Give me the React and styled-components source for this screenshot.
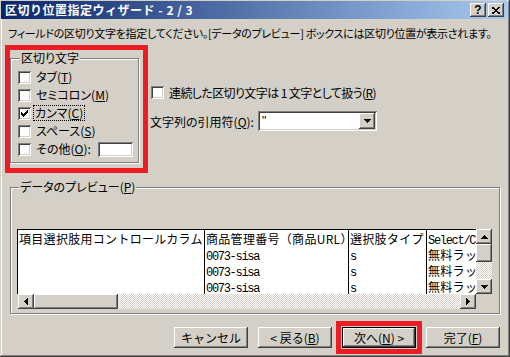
import React from "react";
import styled, { createGlobalStyle, css } from "styled-components";

const GlobalStyle = createGlobalStyle`
	html, body {
		margin: 0;
		padding: 0;
		background: #d4d0c8;
	}
	body {
		font-family: "Noto Sans CJK JP", "Liberation Sans", sans-serif;
		font-size: 12px;
		color: #000;
	}
`;

const raised = css`
	box-shadow: inset -1px -1px #404040, inset 1px 1px #fff,
		inset -2px -2px #808080, inset 2px 2px #d4d0c8;
`;
const sunken = css`
	box-shadow: inset 1px 1px #808080, inset -1px -1px #fff,
		inset 2px 2px #404040, inset -2px -2px #d4d0c8;
`;
const checker = css`
	background-color: #fff;
	background-image: conic-gradient(#d4d0c8 25%, #fff 0 50%, #d4d0c8 0 75%, #fff 0);
	background-size: 2px 2px;
`;

const Window = styled.div`
	width: 510px;
	height: 357px;
	box-sizing: border-box;
	padding: 1px 3px 3px 1px;
	background: #d4d0c8;
	box-shadow: inset -1px -1px #404040, inset 1px 1px #d4d0c8,
		inset -2px -2px #808080, inset 2px 2px #fff;
	display: flex;
	flex-direction: column;
	overflow: hidden;
	font-feature-settings: "palt";
`;
const TitleBar = styled.div`
	height: 18px;
	display: flex;
	align-items: center;
	padding: 0 3px 0 4px;
	background: linear-gradient(to right, #0a246a, #a6caf0);
`;
const Title = styled.div`
	flex: 1;
	color: #fff;
	font-weight: bold;
	line-height: 18px;
	letter-spacing: 0.5px;
	white-space: nowrap;
	font-feature-settings: normal;
`;
const TitleBtn = styled.div`
	width: 16px;
	height: 14px;
	background: #d4d0c8;
	${raised};
	display: flex;
	align-items: center;
	justify-content: center;
	font-family: "Liberation Sans", sans-serif;
	font-weight: bold;
	font-size: 12px;
	line-height: 14px;
	& + & {
		margin-left: 2px;
	}
`;

const Instruction = styled.div`
	margin: 7px 0 0 7px;
	font-size: 11px;
	letter-spacing: -0.3px;
	line-height: 14px;
	white-space: nowrap;
`;

const TopRow = styled.div`
	display: flex;
	margin: 5px 0 0 4px;
	height: 128px;
`;
const RedFrame = styled.div`
	border: 5px solid #ec1c24;
	box-sizing: border-box;
	width: ${p => p.$w || "auto"};
	padding: ${p => p.$pad || "0"};
	margin: ${p => p.$m || "0"};
	display: flex;
	flex-direction: column;
`;

const Group = styled.fieldset`
	margin: ${p => p.$m || "0"};
	min-width: 0;
	padding: ${p => p.$pad};
	border: 1px solid #808080;
	box-shadow: 1px 1px 0 #fff, inset 1px 1px 0 #fff;
`;
const Legend = styled.legend`
	padding: 0 1px;
	margin-left: 2px;
	line-height: 14px;
	background: #d4d0c8;
`;

const CheckRow = styled.div`
	display: flex;
	align-items: center;
	height: ${p => p.$h || "18px"};
	padding-left: ${p => p.$indent || "0"};
`;
const Box = styled.span`
	width: 13px;
	height: 13px;
	box-sizing: border-box;
	background: #fff;
	${sunken};
	display: inline-flex;
	align-items: center;
	justify-content: center;
	flex-shrink: 0;
`;
const Label = styled.span`
	margin-left: ${p => (p.$focus ? "2px" : "4px")};
	padding: 0 1px;
	line-height: 14px;
	letter-spacing: ${p => p.$ls || "normal"};
	white-space: pre;
	border: ${p => (p.$focus ? "1px dotted #000" : "0")};
`;
const TextBox = styled.span`
	margin-left: auto;
	width: 35px;
	height: 15px;
	box-sizing: border-box;
	background: #fff;
	${sunken};
`;

const Options = styled.div`
	margin-left: 2px;
	padding-top: 40px;
	display: flex;
	flex-direction: column;
`;
const QuoteRow = styled.div`
	display: flex;
	align-items: center;
	margin-top: 11px;
	height: 20px;
`;
const QuoteLabel = styled.span`
	width: 108px;
	white-space: nowrap;
`;
const Combo = styled.div`
	width: 119px;
	height: 20px;
	box-sizing: border-box;
	background: #fff;
	${sunken};
	display: flex;
	align-items: center;
	padding: 2px;
`;
const ComboText = styled.span`
	flex: 1;
	padding-left: 2px;
	font-family: "Liberation Sans", sans-serif;
	line-height: 16px;
`;
const ArrowBtn = styled.div`
	width: ${p => p.$w || "16px"};
	height: ${p => p.$h || "16px"};
	flex-shrink: 0;
	box-sizing: border-box;
	background: #d4d0c8;
	${raised};
	display: flex;
	align-items: center;
	justify-content: center;
`;

const Preview = styled.div`
	height: 80px;
	display: grid;
	grid-template-columns: minmax(0, 1fr) 16px;
	grid-template-rows: 65px 15px;
`;
const Table = styled.div`
	display: flex;
	min-width: 0;
	overflow: hidden;
	background: #fff;
	border-left: 1px solid #000;
	border-top: 1px solid #000;
	font-feature-settings: normal;
	font-size: 12px;
	letter-spacing: 0.3px;
`;
const Column = styled.div`
	flex: ${p => (p.$last ? "1 1 0" : `0 0 ${p.$w}`)};
	min-width: 0;
	box-sizing: border-box;
	border-right: ${p => (p.$last ? "0" : "1px solid #000")};
	overflow: hidden;
	white-space: nowrap;
`;
const Cell = styled.div`
	height: ${p => (p.$head ? "17px" : "16px")};
	line-height: ${p => (p.$head ? "17px" : "16px")};
	padding-left: 1px;
	overflow: hidden;
`;
const Latin = styled.span`
	font-family: "Liberation Mono", monospace;
	font-size: 12px;
	letter-spacing: -1.3px;
`;
const VScroll = styled.div`
	display: flex;
	flex-direction: column;
	${checker};
`;
const HScroll = styled.div`
	display: flex;
	margin-left: 1px;
	min-width: 0;
	${checker};
`;
const Thumb = styled.div`
	flex: 0 0 ${p => p.$size};
	background: #d4d0c8;
	${raised};
`;
const Spacer = styled.div`
	flex: 1;
`;

const ButtonRow = styled.div`
	display: flex;
	justify-content: flex-end;
	align-items: center;
	gap: 10px;
	margin: 13px 7px 0 0;
`;
const Button = styled.div`
	width: 74px;
	height: 21px;
	box-sizing: border-box;
	background: #d4d0c8;
	${raised};
	border: ${p => (p.$default ? "1px solid #000" : "0")};
	display: flex;
	align-items: center;
	justify-content: center;
	white-space: nowrap;
	line-height: 14px;
	font-feature-settings: normal;
`;

const Arrow = ({ dir }) => {
	const pts = {
		up: "0,4 7,4 3.5,0",
		down: "0,0 7,0 3.5,4",
		left: "4,0 4,7 0,3.5",
		right: "0,0 0,7 4,3.5",
	}[dir];
	const vertical = dir === "up" || dir === "down";
	return (
		<svg width={vertical ? 7 : 4} height={vertical ? 4 : 7} shapeRendering="crispEdges">
			<polygon points={pts} fill="#000" />
		</svg>
	);
};

const Check = () => (
	<svg width="7" height="7" viewBox="0 0 7 7" shapeRendering="crispEdges">
		<path
			d="M6 0h1v3h-1v1h-1v1h-1v1h-1v1h-1v-1h-1v-1h-1v-3h1v1h1v1h1v-1h1v-1h1z"
			fill="#000"
		/>
	</svg>
);

const delimiters = [
	{ text: "タブ", key: "T" },
	{ text: "セミコロン", key: "M" },
	{ text: "カンマ", key: "C", checked: true, focus: true },
	{ text: "スペース", key: "S" },
];

const columns = [
	{ w: "187px", head: "項目選択肢用コントロールカラム", rows: ["", "", ""] },
	{ w: "144px", head: "商品管理番号（商品URL）", rows: ["0073-sisa", "0073-sisa", "0073-sisa"], latin: true },
	{ w: "78px", head: "選択肢タイプ", rows: ["s", "s", "s"], latin: true },
	{ w: "120px", head: "Select/Checkbox", rows: ["無料ラッピング", "無料ラッピング", "無料ラッピング"], headLatin: true, last: true },
];

function App() {
	return (
		<>
			<GlobalStyle />
			<Window>
				<TitleBar>
					<Title>区切り位置指定ウィザード - 2 / 3</Title>
					<TitleBtn>?</TitleBtn>
					<TitleBtn>
						<svg width="8" height="7" shapeRendering="crispEdges">
							<path d="M0 0 L8 7 M8 0 L0 7" stroke="#000" strokeWidth="1.6" />
						</svg>
					</TitleBtn>
				</TitleBar>

				<Instruction>
					フィールドの区切り文字を指定してください。[データのプレビュー] ボックスには区切り位置が表示されます。
				</Instruction>

				<TopRow>
					<RedFrame $w="143px" $pad="1px 4px 5px 0">
						<Group $pad="3px 5px 4px 7px">
							<Legend>区切り文字</Legend>
							{delimiters.map(d => (
								<CheckRow key={d.key}>
									<Box>{d.checked && <Check />}</Box>
									<Label $focus={d.focus}>
										{d.text}(<u>{d.key}</u>)
									</Label>
								</CheckRow>
							))}
							<CheckRow>
								<Box />
								<Label>
									その他(<u>O</u>):
								</Label>
								<TextBox />
							</CheckRow>
						</Group>
					</RedFrame>

					<Options>
						<CheckRow $h="15px" $indent="1px">
							<Box />
							<Label $ls="-0.6px">
								連続した区切り文字は 1 文字として扱う(<u>R</u>)
							</Label>
						</CheckRow>
						<QuoteRow>
							<QuoteLabel>
								文字列の引用符(<u>Q</u>):
							</QuoteLabel>
							<Combo>
								<ComboText>"</ComboText>
								<ArrowBtn>
									<Arrow dir="down" />
								</ArrowBtn>
							</Combo>
						</QuoteRow>
					</Options>
				</TopRow>

				<Group $pad="35px 7px 4px 6px" $m="7px 7px 0 9px">
					<Legend>
						データのプレビュー(<u>P</u>)
					</Legend>
					<Preview>
						<Table>
							{columns.map((c, i) => (
								<Column key={i} $w={c.w} $last={c.last}>
									<Cell $head>{c.headLatin ? <Latin>{c.head}</Latin> : c.head}</Cell>
									{c.rows.map((r, j) => (
										<Cell key={j}>{c.latin ? <Latin>{r}</Latin> : r}</Cell>
									))}
								</Column>
							))}
						</Table>
						<VScroll>
							<ArrowBtn $h="15px">
								<Arrow dir="up" />
							</ArrowBtn>
							<Thumb $size="18px" />
							<Spacer />
							<ArrowBtn $h="15px">
								<Arrow dir="down" />
							</ArrowBtn>
						</VScroll>
						<HScroll>
							<ArrowBtn $h="15px">
								<Arrow dir="left" />
							</ArrowBtn>
							<Thumb $size="84px" />
							<Spacer />
							<ArrowBtn $h="15px">
								<Arrow dir="right" />
							</ArrowBtn>
						</HScroll>
					</Preview>
				</Group>

				<ButtonRow>
					<Button>キャンセル</Button>
					<Button>
						&lt; 戻る(<u>B</u>)
					</Button>
					<RedFrame $pad="1px" $m="-6px">
						<Button $default>
							次へ(<u>N</u>) &gt;
						</Button>
					</RedFrame>
					<Button>
						完了(<u>F</u>)
					</Button>
				</ButtonRow>
			</Window>
		</>
	);
}

export default App;
